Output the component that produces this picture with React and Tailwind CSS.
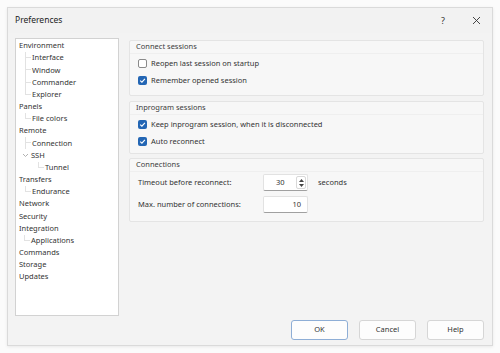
import React from "react";

const tree = [
  { label: "Environment", depth: 0 },
  { label: "Interface", depth: 1, line: "mid" },
  { label: "Window", depth: 1, line: "mid" },
  { label: "Commander", depth: 1, line: "mid" },
  { label: "Explorer", depth: 1, line: "end" },
  { label: "Panels", depth: 0 },
  { label: "File colors", depth: 1, line: "end" },
  { label: "Remote", depth: 0 },
  { label: "Connection", depth: 1, line: "mid" },
  { label: "SSH", depth: 1, chevron: true },
  { label: "Tunnel", depth: 2, line: "end" },
  { label: "Transfers", depth: 0 },
  { label: "Endurance", depth: 1, line: "end" },
  { label: "Network", depth: 0 },
  { label: "Security", depth: 0 },
  { label: "Integration", depth: 0 },
  { label: "Applications", depth: 1, line: "end", short: true },
  { label: "Commands", depth: 0 },
  { label: "Storage", depth: 0 },
  { label: "Updates", depth: 0 },
];

const Connector = ({ kind }) => (
  <div className="flex flex-col h-full w-[6px] mr-[1px]">
    <div className="h-1/2 border-l border-b border-[#e2e2e2]" />
    <div className={"h-1/2 " + (kind === "mid" ? "border-l border-[#e2e2e2]" : "")} />
  </div>
);

const TreeRow = ({ item }) => {
  let pad = "pl-[3px]";
  if (item.depth === 1) pad = item.short ? "pl-[8px]" : "pl-[9px]";
  if (item.depth === 2) pad = "pl-[22px]";
  if (item.chevron) pad = "pl-[6px]";
  return (
    <div className={"flex items-center h-[12.16px] " + pad}>
      {item.line && <Connector kind={item.line} />}
      {item.chevron && (
        <svg width="8" height="12" viewBox="0 0 8 12" className="mr-[1px]">
          <path d="M1 5 L3.5 7.5 L6 5" fill="none" stroke="#a8a8a8" strokeWidth="0.9" />
        </svg>
      )}
      <span className="text-[7.5px] text-[#333] leading-none">{item.label}</span>
    </div>
  );
};

const Check = ({ on }) =>
  on ? (
    <div className="w-[9px] h-[9px] rounded-[2px] bg-[#2366b4] flex items-center justify-center">
      <svg width="7" height="7" viewBox="0 0 7 7">
        <path d="M1.2 3.6 L2.9 5.2 L5.9 1.8" fill="none" stroke="white" strokeWidth="1.1" />
      </svg>
    </div>
  ) : (
    <div className="w-[9px] h-[9px] rounded-[2px] bg-white border border-[#8a8a8a]" />
  );

const CheckRow = ({ on, label }) => (
  <div className="flex items-center gap-[4px] h-[17px] pl-[8px]">
    <Check on={on} />
    <span className="text-[7.5px] text-[#333]">{label}</span>
  </div>
);

const Group = ({ title, h, children }) => (
  <div className={"border border-[#e4e4e4] bg-[#f7f7f7] rounded-[2px] " + h}>
    <div className="h-[13px] flex items-center pl-[6px] border-b border-[#efefef]">
      <span className="text-[7.5px] text-[#3c3c3c]">{title}</span>
    </div>
    {children}
  </div>
);

const Btn = ({ label, primary }) => (
  <div
    className={
      "w-[57px] h-[20px] rounded-[3px] bg-[#fdfdfd] flex items-center justify-center text-[7.5px] text-[#333] border " +
      (primary ? "border-[#8eaed6]" : "border-[#d6d6d6]")
    }
  >
    {label}
  </div>
);

export default function App() {
  return (
    <div
      className="w-[500px] h-[353px] bg-[#fbfbfb] pt-[7px] pl-[7px]"
      style={{ fontFamily: "'Noto Sans', 'Liberation Sans', sans-serif" }}
    >
      <div className="w-[486px] h-[339px] border border-[#dadada] bg-[#f3f3f3] flex flex-col shadow-[0_1px_3px_rgba(0,0,0,0.08)]">
        <div className="h-[25px] flex items-center justify-between pl-[7px] pr-[11px] bg-[#f2f2f2]">
          <span className="text-[8.5px] text-[#222]">Preferences</span>
          <div className="flex items-center gap-[27px]">
            <span className="text-[9px] text-[#333]">?</span>
            <svg width="9" height="9" viewBox="0 0 9 9">
              <path d="M1 1 L8 8 M8 1 L1 8" stroke="#333" strokeWidth="0.9" />
            </svg>
          </div>
        </div>
        <div className="flex pl-[7px] pt-[5px] gap-[10px]">
          <div className="w-[104px] h-[278px] bg-white border border-[#d2d2d2] pt-[1px]">
            {tree.map((t) => (
              <TreeRow key={t.label} item={t} />
            ))}
          </div>
          <div className="w-[355px] flex flex-col pt-[2px]">
            <Group title="Connect sessions" h="h-[56px]">
              <div className="pt-[1px]">
                <CheckRow on={false} label="Reopen last session on startup" />
                <CheckRow on={true} label="Remember opened session" />
              </div>
            </Group>
            <div className="h-[5px]" />
            <Group title="Inprogram sessions" h="h-[53px]">
              <div className="pt-[1px]">
                <CheckRow on={true} label="Keep inprogram session, when it is disconnected" />
                <CheckRow on={true} label="Auto reconnect" />
              </div>
            </Group>
            <div className="h-[4px]" />
            <Group title="Connections" h="h-[64px]">
              <div className="pl-[8px] pt-[2px] flex flex-col gap-[5px]">
                <div className="flex items-center h-[17px]">
                  <span className="w-[125px] text-[7.5px] text-[#333]">Timeout before reconnect:</span>
                  <div className="w-[45px] h-[17px] bg-white border border-[#e2e2e2] border-b-[#a0a0a0] rounded-[2px] flex items-center">
                    <span className="flex-1 text-[7.5px] text-[#333] pl-[12px]">30</span>
                    <div className="w-[10px] h-[13px] mr-[1px] border border-[#d8d8d8] rounded-[2px] flex flex-col items-center justify-center gap-[2px]">
                      <svg width="5" height="3" viewBox="0 0 5 3">
                        <path d="M0 3 L2.5 0 L5 3 Z" fill="#444" />
                      </svg>
                      <svg width="5" height="3" viewBox="0 0 5 3">
                        <path d="M0 0 L2.5 3 L5 0 Z" fill="#444" />
                      </svg>
                    </div>
                  </div>
                  <span className="ml-[10px] text-[7.5px] text-[#333]">seconds</span>
                </div>
                <div className="flex items-center h-[17px]">
                  <span className="w-[125px] text-[7.5px] text-[#333]">Max. number of connections:</span>
                  <div className="w-[45px] h-[17px] bg-white border border-[#e2e2e2] border-b-[#a0a0a0] rounded-[2px] flex items-center justify-end pr-[6px]">
                    <span className="text-[7.5px] text-[#333]">10</span>
                  </div>
                </div>
              </div>
            </Group>
          </div>
        </div>
        <div className="flex justify-end gap-[11px] pr-[8px] pt-[4px]">
          <Btn label="OK" primary />
          <Btn label="Cancel" />
          <Btn label="Help" />
        </div>
      </div>
    </div>
  );
}
